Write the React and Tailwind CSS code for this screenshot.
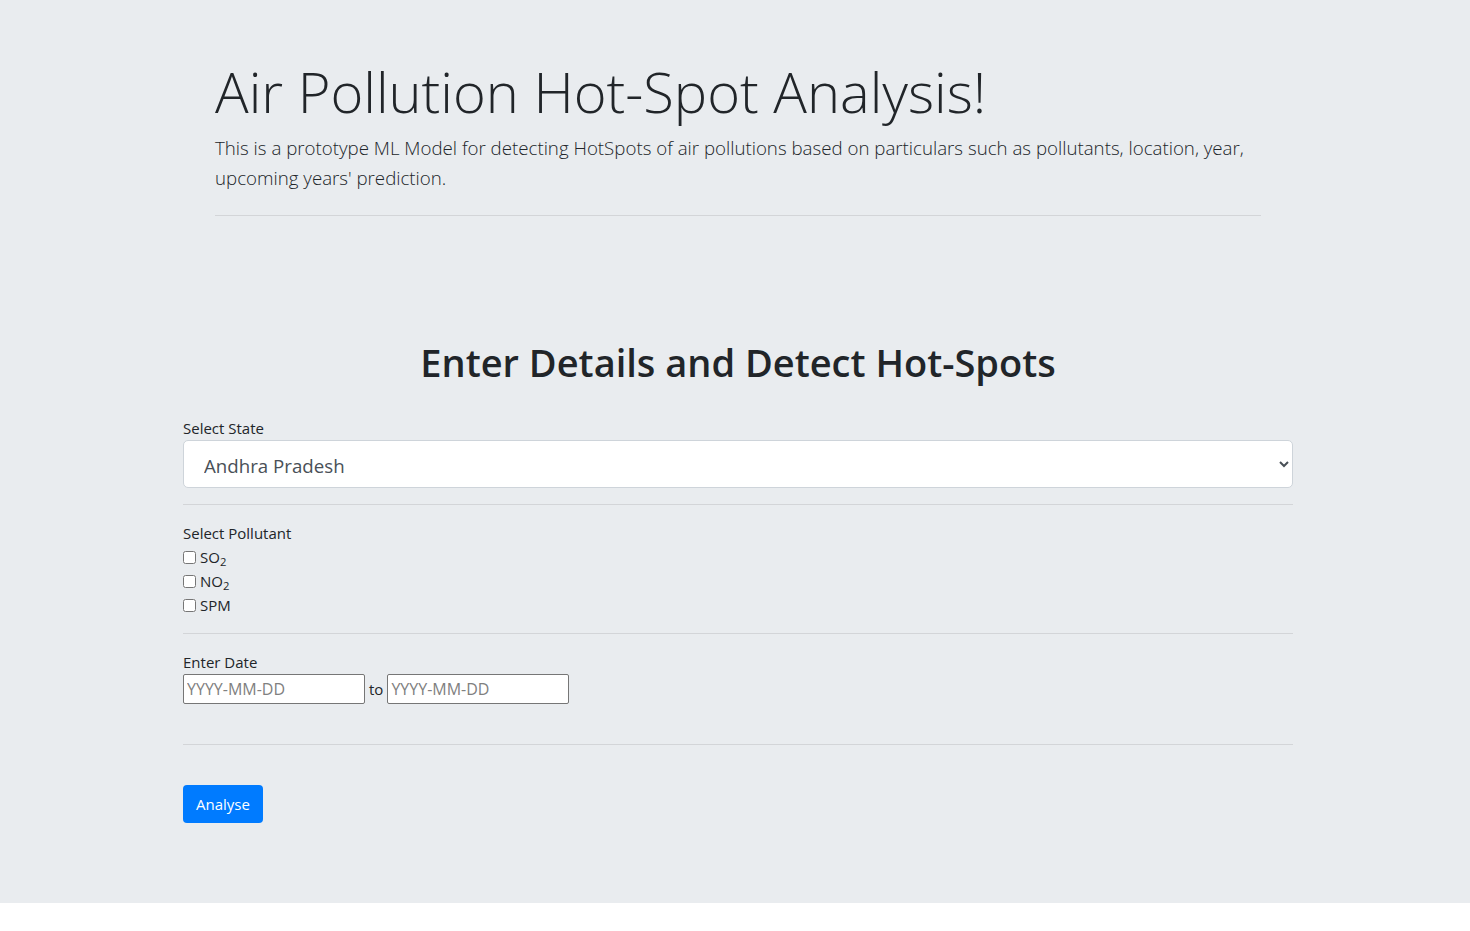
import { useState } from "react";

const states = ["Andhra Pradesh", "Assam", "Bihar", "Delhi", "Gujarat", "Karnataka", "Kerala", "Maharashtra"];

function App() {
    const [state, setState] = useState(states[0]);

    return (
        <div className="font-['Open_Sans',sans-serif] text-[#212529]">
            <div className="bg-[#e9ecef] pt-[58px] pb-[80px]">
                <div className="ml-[215px] w-[1046px]">
                    <h1 className="text-[56px] leading-[67px] font-light">Air Pollution Hot-Spot Analysis!</h1>
                    <p className="mt-[8px] text-[18.7px] leading-[30px] font-light">
                        This is a prototype ML Model for detecting HotSpots of air pollutions based on particulars such as pollutants, location, year, upcoming years' prediction.
                    </p>
                    <hr className="mt-[22px] border-t border-[#d3d5d8]" />
                </div>

                <div className="ml-[183px] w-[1110px]">
                    <h2 className="mt-[122px] text-center text-[38px] leading-[48px] font-semibold">
                        Enter Details and Detect Hot-Spots
                    </h2>

                    <div className="mt-[30px]">
                        <label className="block text-[15px] leading-[24px]">Select State</label>
                        <select
                            value={state}
                            onChange={(e) => setState(e.target.value)}
                            className="block w-full h-[48px] pl-[16px] pr-[8px] pt-[2px] bg-white border border-[#ced4da] rounded-[5px] text-[18.7px] text-[#495057]"
                        >
                            {states.map((s) => (
                                <option key={s}>{s}</option>
                            ))}
                        </select>
                    </div>

                    <hr className="mt-[16px] border-t border-[#d3d5d8]" />

                    <div className="mt-[16px] text-[15px] leading-[24px]">
                        <div>Select Pollutant</div>
                        <label className="flex items-center gap-[4px]">
                            <input type="checkbox" className="w-[13px] h-[13px]" />
                            <span>SO<sub>2</sub></span>
                        </label>
                        <label className="flex items-center gap-[4px]">
                            <input type="checkbox" className="w-[13px] h-[13px]" />
                            <span>NO<sub>2</sub></span>
                        </label>
                        <label className="flex items-center gap-[4px]">
                            <input type="checkbox" className="w-[13px] h-[13px]" />
                            <span>SPM</span>
                        </label>
                    </div>

                    <hr className="mt-[16px] border-t border-[#d3d5d8]" />

                    <div className="mt-[16px] text-[15px] leading-[24px]">
                        <div>Enter Date</div>
                        <div className="flex items-center gap-[4px]">
                            <input
                                type="text"
                                placeholder="YYYY-MM-DD"
                                className="w-[182px] h-[30px] px-[3px] bg-white border border-[#767676] rounded-[2px] text-[16px] placeholder:text-[#808080]"
                            />
                            <span>to</span>
                            <input
                                type="text"
                                placeholder="YYYY-MM-DD"
                                className="w-[182px] h-[30px] px-[3px] bg-white border border-[#767676] rounded-[2px] text-[16px] placeholder:text-[#808080]"
                            />
                        </div>
                    </div>

                    <hr className="mt-[40px] border-t border-[#d3d5d8]" />

                    <button className="mt-[40px] h-[38px] px-[13px] bg-[#007bff] text-white text-[15px] rounded-[4px]">
                        Analyse
                    </button>
                </div>
            </div>
        </div>
    );
}

export default App;
